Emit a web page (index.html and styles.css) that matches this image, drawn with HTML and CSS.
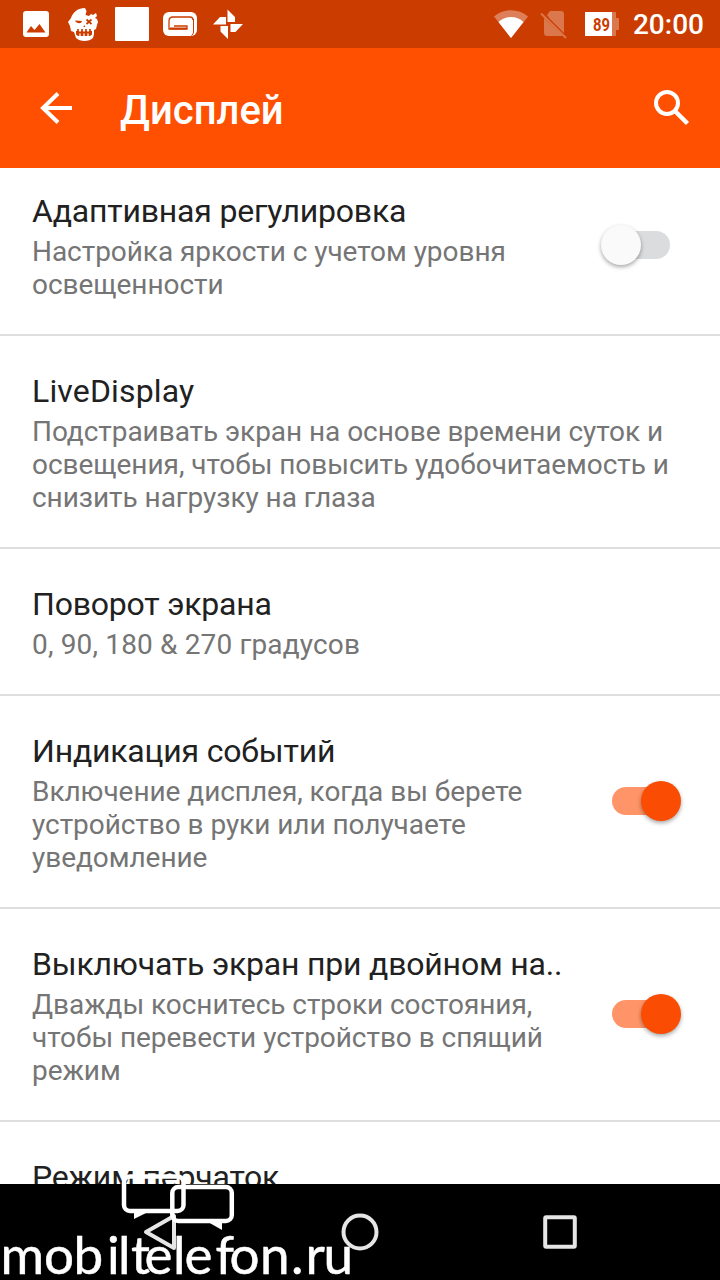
FILE: index.html
```
<!DOCTYPE html>
<html lang="ru">
<head>
    <meta charset="UTF-8">
    <meta name="viewport" content="width=device-width, initial-scale=1.0">
    <title>Дисплей</title>
    <link rel="stylesheet" href="styles.css">
</head>
<body>
    <div class="screen">
        <div class="status-bar">
            <svg class="status-left" width="260" height="48" viewBox="0 0 260 48" fill="#fff">
                <path fill-rule="evenodd" d="M26 11h20a3 3 0 0 1 3 3v20a3 3 0 0 1-3 3H26a3 3 0 0 1-3-3V14a3 3 0 0 1 3-3zM26.500 32.500h19L39.500 24l-5 6-3.500-4z"/>
                <!-- zombie face -->
                <path d="M71 18c2-6 7-10 14-10l1.500 3-1 4 3.500 1 2-2 2 1 3-2 1 3-2 2 2 1 1 3-1 3-1 4-2 1v4l-1 4c-4 4-13 4-17 0l-2-6-3-1-1-5-2-4z"/>
                <path fill="#cb3c00" d="M75 20.500l7 .500c-.500 3-5.500 3-7-.500zM83.500 27l.500-2 1.500 2zM76 31h16v3.500l-2 1.500H78l-2-1.500z"/>
                <path fill="none" stroke="#cb3c00" stroke-width="1.700" d="M86.500 19.500l5 4.500M91.500 19.500l-5 4.500M78 29v3M82 29v3M86 29v3M90 29v3"/>
                <path fill="none" stroke="#fff" stroke-width="1.300" d="M80 29.500v2.300M84 29.500v2.300M88 29.500v2.300M80 33.500V37M84 33.500V37M88 33.500V37"/>
                <rect x="115" y="7" width="34" height="34" rx="1"/>
                <rect x="163" y="12" width="34" height="24" rx="6"/>
                <path d="M193 20q0-3-3-3h-17q-4 0-4 4v8h18v-3h-13" fill="none" stroke="#cb3c00" stroke-width="1.300"/>
                <path d="M170 27.500h17v2h-17z" fill="#cb3c00"/>
                <path d="M193.500 19v13q0 2-2 3.500" fill="none" stroke="#cb3c00" stroke-width="1"/>
                <path d="M227.500 9.500l7.500 7.500v5h-7.500zM243 24l-7.500 8h-5v-8zM228 39l-7.500-7.500V26h7.500zM213 24.500l7-7.500h6v7.500z"/>
                <path d="M228 22.500l1.500 1.500-1.500 1.500-1.500-1.500z" fill="#cb3c00"/>
            </svg>
            <div class="status-right">
                <svg width="126" height="48" viewBox="494 0 126 48">
                    <path fill="#fff" fill-opacity=".35" d="M494 16.500a26 26 0 0 1 34 0L511 38z"/>
                    <path fill="#fff" d="M498.500 22a18 18 0 0 1 25 0L511 38z"/>
                    <path fill="#db774d" d="M550 11h11q3 0 3 3v19l-15-15-2-3zM544 18l19 18h-16q-3 0-3-3z"/>
                    <path stroke="#db774d" stroke-width="2" d="M541 13.500l25 24.500"/>
                    <path fill="#db774d" d="M612 12h4v6h3v12h-3v6h-4z"/>
                    <path fill="#fff" d="M585 12h27v24h-27z"/>
                    <text class="battery-text" x="593" y="30.500" textLength="17" lengthAdjust="spacingAndGlyphs">89</text>
                </svg>
                <span class="clock">20:00</span>
            </div>
        </div>

        <header class="toolbar">
            <svg class="back" width="34" height="34" viewBox="0 0 34 34" fill="none" stroke="#fff" stroke-width="4">
                <path d="M33 17H4M19 2.500L4 17l15 14.500"/>
            </svg>
            <h1>Дисплей</h1>
            <svg width="38" height="38" viewBox="0 0 38 38" fill="none" stroke="#fff">
                <circle cx="14" cy="14" r="11" stroke-width="4"/>
                <path d="M22 22l12.500 12.500" stroke-width="4.500"/>
            </svg>
        </header>

        <main class="settings">
            <div class="row first">
                <div class="text">
                    <div class="title">Адаптивная регулировка</div>
                    <div class="summary">Настройка яркости с учетом уровня<br>освещенности</div>
                </div>
                <div class="switch"><span class="thumb"></span></div>
            </div>
            <div class="row">
                <div class="text">
                    <div class="title latin">LiveDisplay</div>
                    <div class="summary">Подстраивать экран на основе времени суток и<br>освещения, чтобы повысить удобочитаемость и<br>снизить нагрузку на глаза</div>
                </div>
            </div>
            <div class="row">
                <div class="text">
                    <div class="title">Поворот экрана</div>
                    <div class="summary digits">0, 90, 180 &amp; 270 градусов</div>
                </div>
            </div>
            <div class="row">
                <div class="text">
                    <div class="title">Индикация событий</div>
                    <div class="summary">Включение дисплея, когда вы берете<br>устройство в руки или получаете<br>уведомление</div>
                </div>
                <div class="switch on"><span class="thumb"></span></div>
            </div>
            <div class="row">
                <div class="text">
                    <div class="title">Выключать экран при двойном на..</div>
                    <div class="summary">Дважды коснитесь строки состояния,<br>чтобы перевести устройство в спящий<br>режим</div>
                </div>
                <div class="switch on"><span class="thumb"></span></div>
            </div>
            <div class="row">
                <div class="text">
                    <div class="title">Режим перчаток</div>
                </div>
            </div>
        </main>

        <nav class="nav-bar">
            <svg width="40" height="40" viewBox="0 0 40 40"><path d="M34 4v32L6 20z"/></svg>
            <svg width="40" height="40" viewBox="0 0 40 40"><circle cx="20" cy="20" r="16.500"/></svg>
            <svg width="40" height="40" viewBox="0 0 40 40"><rect x="5.200" y="5.200" width="29.600" height="29.600" rx="1"/></svg>
        </nav>

        <svg class="watermark" width="360" height="110" viewBox="0 1170 360 110">
            <g fill="none" stroke="#fff" stroke-width="4.500">
                <rect x="124" y="1176.500" width="59.500" height="34.500" rx="6"/>
                <rect x="172.300" y="1187" width="59.500" height="34" rx="6"/>
            </g>
            <path fill="#fff" d="M134 1212v7l14-7zM208 1222l14 8v-8z"/>
            <text x="0.5 44 73.500 107 118 131 144.500 173 184.500 215.500 229.500 260 291 305.500 323.500" y="1274">mobiltelefon.ru</text>
        </svg>
    </div>
</body>
</html>
```
FILE: styles.css
```
body, html {
    margin: 0;
    padding: 0;
    font-family: Roboto, 'Noto Sans', sans-serif;
    background-color: #fff;
}

.screen {
    position: relative;
    display: flex;
    flex-direction: column;
    width: 720px;
    height: 1280px;
    overflow: hidden;
}

.status-bar {
    display: flex;
    justify-content: space-between;
    flex: 0 0 48px;
    background-color: #cb3c00;
}

.status-right {
    display: flex;
    align-items: center;
    gap: 13px;
    padding-right: 16px;
}

.battery-text {
    font-size: 18px;
    font-weight: 700;
    fill: #cb3c00;
}

.clock {
    font-size: 28px;
    font-weight: 500;
    line-height: 46px;
    padding-top: 2px;
    color: #fff;
}

.toolbar {
    display: flex;
    align-items: center;
    flex: 0 0 120px;
    box-sizing: border-box;
    padding: 0 29px 0 39px;
    background-color: #ff4f00;
}

h1 {
    flex: 1;
    margin: 0;
    padding: 5px 0 0 47px;
    font-size: 40px;
    font-weight: 500;
    line-height: 48px;
    color: #fff;
}

.settings {
    flex: 1;
    min-height: 0;
    overflow: hidden;
}

.row {
    display: flex;
    align-items: center;
    justify-content: space-between;
    padding: 36px 39px 33px 32px;
    border-bottom: 2px solid #dedede;
}

.row.first {
    padding-top: 24px;
}

.text {
    white-space: nowrap;
}

.title {
    font-size: 32px;
    line-height: 38px;
    letter-spacing: -0.2px;
    margin-bottom: 5px;
    color: #212121;
}

.title.latin {
    letter-spacing: 0.15px;
}

.summary {
    font-size: 28px;
    line-height: 33px;
    letter-spacing: -0.05px;
    color: #757575;
}

.summary.digits {
    letter-spacing: 0.16px;
}

.switch {
    display: flex;
    align-items: center;
    width: 58px;
    height: 28px;
    margin: 0 11px 4px 0;
    border-radius: 14px;
    background-color: #dbdcde;
}

.thumb {
    flex: none;
    width: 40px;
    height: 40px;
    margin-left: -11px;
    border-radius: 50%;
    background-color: #fafafa;
    box-shadow: 0 2px 4px rgba(0, 0, 0, 0.35);
}

.switch.on {
    justify-content: flex-end;
    background-color: #ff9468;
}

.switch.on .thumb {
    margin-right: -11px;
    background-color: #fa4d03;
}

.nav-bar {
    display: flex;
    justify-content: center;
    gap: 160px;
    flex: 0 0 96px;
    align-items: center;
    background-color: #000;
}

.nav-bar svg {
    fill: none;
    stroke: #e6e6e6;
    stroke-width: 4;
    stroke-linejoin: round;
}

/* site mark laid over the bottom of the screen */
.watermark {
    position: absolute;
    left: 0;
    bottom: 0;
}

.watermark text {
    font-family: Lato, sans-serif;
    font-size: 53px;
    fill: #fff;
    stroke: #fff;
    stroke-width: 0.5px;
}
```
